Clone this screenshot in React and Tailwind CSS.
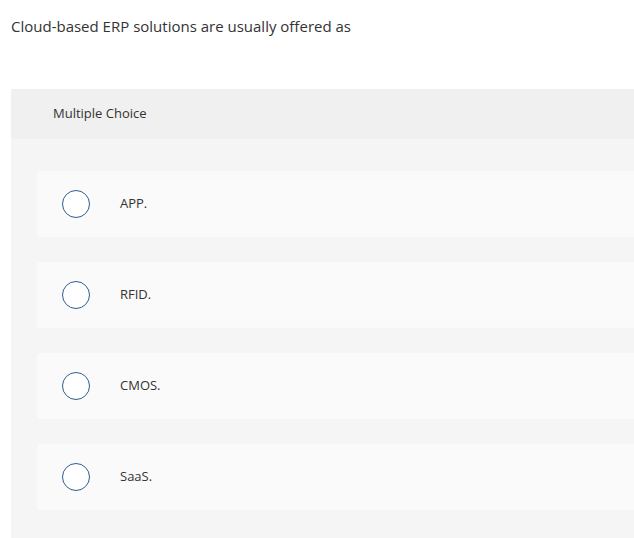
import React from 'react';

const options = ['APP.', 'RFID.', 'CMOS.', 'SaaS.'];

export default function App() {
  return (
    <div className="w-[634px] h-[538px] overflow-hidden bg-white text-[#333] font-['Open_Sans',sans-serif]">
      <p className="pl-[11px] pt-[15px] text-[15px] leading-[22px]">
        Cloud-based ERP solutions are usually offered as
      </p>

      <div className="ml-[11px] mt-[52px] w-[640px] bg-[#f5f5f5] pb-[40px]">
        <div className="h-[50px] bg-[#f0f0f0] pl-[42px] flex items-center text-[13px]">
          Multiple Choice
        </div>

        <div className="pt-[32px] pl-[26px] flex flex-col gap-[25px]">
          {options.map((opt) => (
            <div key={opt} className="h-[66px] bg-[#fafafa] rounded-[3px] flex items-center">
              <span className="ml-[25px] w-[28px] h-[28px] rounded-full border-[1.5px] border-[#2e5d8f] bg-white shrink-0"></span>
              <span className="ml-[30px] text-[13px]">{opt}</span>
            </div>
          ))}
        </div>
      </div>
    </div>
  );
}
